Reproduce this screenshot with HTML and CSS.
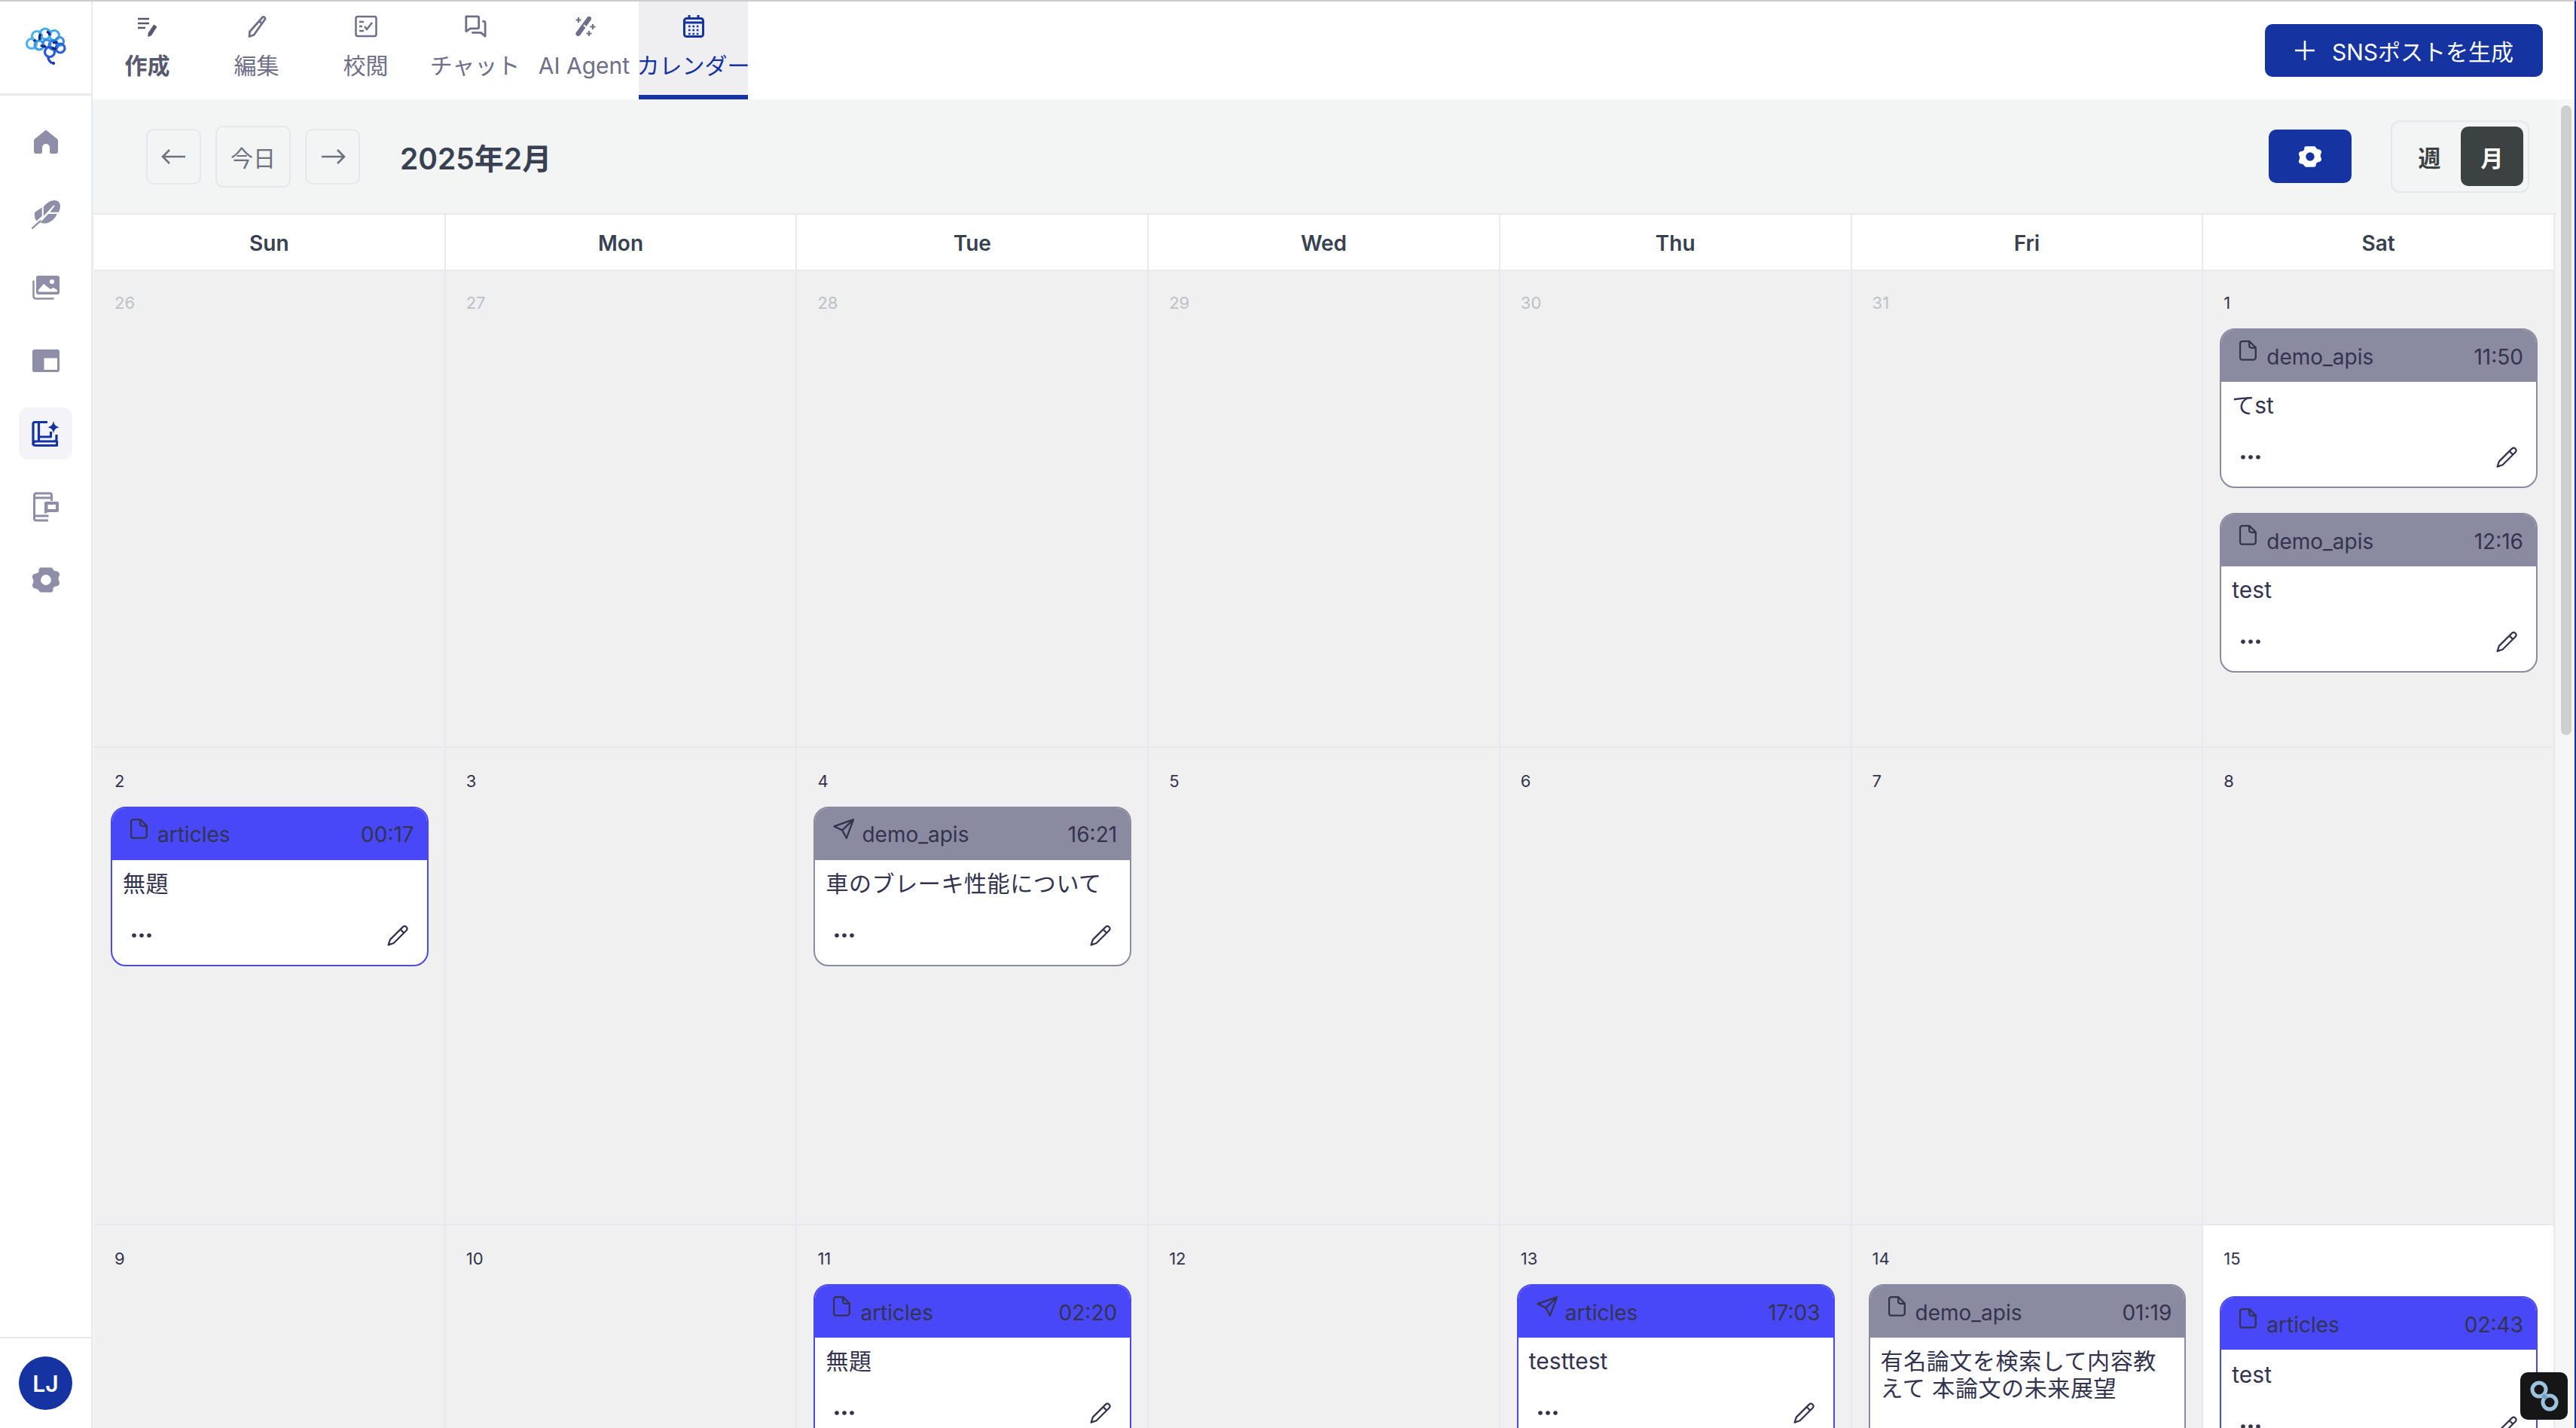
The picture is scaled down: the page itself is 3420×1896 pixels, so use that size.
FILE: index.html
```html
<!DOCTYPE html>
<html lang="ja">
<head>
    <meta charset="UTF-8">
    <title>カレンダー</title>
    <link rel="stylesheet" href="styles.css">
</head>
<body>
    <svg class="sprite" xmlns="http://www.w3.org/2000/svg">
        <symbol id="i-file" viewBox="0 0 23 27"><path d="M4 1.2h9.5l8.3 8.3V22.5a3.2 3.2 0 0 1-3.2 3.2H4a3 3 0 0 1-3-3V4.2a3 3 0 0 1 3-3z M13.2 1.5v5.7a2.6 2.6 0 0 0 2.6 2.6h5.7" fill="none" stroke="currentColor" stroke-width="2.3" stroke-linejoin="round"/></symbol>
        <symbol id="i-send" viewBox="0 0 28 27"><path d="M27 1.2 1.6 10.2l10.6 5.2 5.6 10.4z M27 1.2 12.2 15.4" fill="none" stroke="currentColor" stroke-width="2.3" stroke-linejoin="round" stroke-linecap="round"/></symbol>
        <symbol id="i-pencil" viewBox="0 0 28 28"><path d="M21 2.6a3.3 3.3 0 0 1 4.7 4.6L8.6 24.3 1.6 26.6l2.3-7z M17.6 6l4.6 4.6" fill="none" stroke="currentColor" stroke-width="2.2" stroke-linejoin="round"/></symbol>
        <symbol id="i-dots" viewBox="0 0 26 6"><circle cx="3" cy="3" r="2.8" fill="currentColor"/><circle cx="13" cy="3" r="2.8" fill="currentColor"/><circle cx="23" cy="3" r="2.8" fill="currentColor"/></symbol>
        <symbol id="i-gear" viewBox="0 0 36 34"><path fill="currentColor" fill-rule="evenodd" d="M12 1.5h12a3 3 0 0 1 2.6 1.5c1 2 2.7 3 5 3.2 2.8.3 4.4 3.5 3 5.8-1.300 2.300-1.300 4.700 0 7 1.400 2.300-.2 5.500-3 5.800-2.300.2-4 1.200-5 3.200A3 3 0 0 1 24 32.500H12A3 3 0 0 1 9.400 31c-1-2-2.700-3-5-3.200-2.800-.3-4.400-3.500-3-5.800 1.300-2.300 1.300-4.700 0-7-1.400-2.300.2-5.500 3-5.800 2.300-.2 4-1.200 5-3.200A3 3 0 0 1 12 1.500z M18 10.500a6.500 6.500 0 1 0 0 13 6.500 6.500 0 0 0 0-13z"/></symbol>
    </svg>

    <div class="app">
        <aside class="sidebar">
            <div class="logo">
                <svg width="54" height="50" viewBox="0 0 54 50" fill="none" stroke-width="3.200">
                    <circle cx="8" cy="22" r="6.500" stroke="#4fb4ea"/>
                    <circle cx="15" cy="12" r="6.500" stroke="#4fb4ea"/>
                    <circle cx="26" cy="9" r="7" stroke="#45aee8"/>
                    <circle cx="38" cy="11" r="6.500" stroke="#45a6e6"/>
                    <circle cx="45" cy="19" r="5.500" stroke="#3b8fe4"/>
                    <circle cx="46" cy="28" r="6" stroke="#2b62dc"/>
                    <circle cx="37" cy="24" r="6" stroke="#2f73de"/>
                    <circle cx="18" cy="24" r="6" stroke="#3c9be6"/>
                    <circle cx="28" cy="22" r="5" stroke="#3a8be2"/>
                    <circle cx="32" cy="33" r="6.500" stroke="#2559d8"/>
                    <path d="M30 40c0 5 3 6 5 8" stroke="#1f4cc8"/>
                    <path d="M20 9c-2 3-2 5-1 8M28 6c3 1 4 2 4 5M11 17l2 2M20 24c3 2 5 2 7 1M36 21c3-1 5-1 6 0M35 27c2 2 4 2 6 1" stroke="#14288a"/>
                    <circle cx="37" cy="48" r="2" fill="#14288a" stroke="none"/>
                </svg>
            </div>
            <nav class="side-nav">
                <a class="side-item" href="#"><svg width="36" height="36" viewBox="0 0 36 36"><path fill="currentColor" d="M18 2.500 33 14.500c.7.6 1 1.300 1 2.200V31a3 3 0 0 1-3 3h-6a2 2 0 0 1-2-2v-6a5 5 0 0 0-10 0v6a2 2 0 0 1-2 2H5a3 3 0 0 1-3-3V16.700c0-.9.3-1.600 1-2.200z"/></svg></a>
                <a class="side-item" href="#"><svg width="38" height="38" viewBox="0 0 36 36"><path fill="currentColor" d="M4 15l9-6v11l-7 6c-2-3-3-7-2-11zM15 8C19 3 24 0 29 0c4 0 7 3 7 7 0 3-1 6-2 8H23l6-8-1-1-13 14zM21 17h11c-3 7-9 12-16 12-2 0-4-.5-5-1z"/><path fill="none" stroke="currentColor" stroke-width="2.200" stroke-linecap="round" d="M1 35l10-9"/></svg></a>
                <a class="side-item" href="#"><svg width="36" height="32" viewBox="0 0 36 32"><path fill="currentColor" fill-rule="evenodd" d="M8 0h25a3 3 0 0 1 3 3v19a3 3 0 0 1-3 3H8a3 3 0 0 1-3-3V3a3 3 0 0 1 3-3zM26 5a3 3 0 1 0 0 6 3 3 0 0 0 0-6zM15 11 8 19v2.500h25V19l-5-3-4 2z"/><path fill="none" stroke="currentColor" stroke-width="2.500" d="M1.500 6.500v21a3 3 0 0 0 3 3h24"/></svg></a>
                <a class="side-item" href="#"><svg width="36" height="30" viewBox="0 0 36 30"><path fill="currentColor" fill-rule="evenodd" d="M3 0h30a3 3 0 0 1 3 3v24a3 3 0 0 1-3 3H3a3 3 0 0 1-3-3V3a3 3 0 0 1 3-3zM15.500 11.500v15.500h17.500V11.500z"/></svg></a>
                <a class="side-item is-active" href="#"><svg width="38" height="38" viewBox="0 0 38 38"><path fill="none" stroke="currentColor" stroke-width="3.200" stroke-linejoin="round" d="M21 3.500H4a2 2 0 0 0-2 2V33c0-2.500 1.500-4 4-4h24a3 3 0 0 0 3-3V20M33.500 28v6.500H6c-2.200 0-4-.6-4-2M9.500 4v25M9.500 23h16v-7"/><path fill="currentColor" d="M29 1.500c.8 5.500 3 8 8.500 8.800-5.500.8-7.700 3-8.500 8.700-.8-5.700-3-7.900-8.500-8.700 5.500-.8 7.700-3.300 8.500-8.800z"/></svg></a>
                <a class="side-item" href="#"><svg width="34" height="40" viewBox="0 0 34 40"><path fill="none" stroke="currentColor" stroke-width="3" stroke-linejoin="round" d="M20 38H4a2.500 2.500 0 0 1-2.500-2.500V4.500A2.500 2.500 0 0 1 4 2h18a2.500 2.500 0 0 1 2.500 2.500V12M1.500 8h23M1.500 32h19"/><path fill="currentColor" fill-rule="evenodd" d="M17 13h15a2 2 0 0 1 2 2v10a2 2 0 0 1-2 2H20l-5 2V15a2 2 0 0 1 2-2zM19.500 17v6H30v-6z"/></svg></a>
                <a class="side-item" href="#"><svg width="40" height="36" class="side-gear"><use href="#i-gear"/></svg></a>
            </nav>
            <div class="side-foot">
                <div class="avatar">LJ</div>
            </div>
        </aside>

        <main class="main">
            <header class="topbar">
                <nav class="tabs">
                    <a class="tab is-strong" href="#">
                        <svg width="30" height="30" viewBox="0 0 30 30" fill="none" stroke="currentColor" stroke-width="2.600"><path d="M2 5h15M2 11h15M2 17h10"/><path fill="currentColor" stroke-width="1.500" stroke-linejoin="round" d="M23.500 13.500l3 2-7 11-3.500 1.500.5-4z"/></svg>
                        <span>作成</span>
                    </a>
                    <a class="tab" href="#">
                        <svg width="30" height="30" viewBox="0 0 30 30" fill="none" stroke="currentColor" stroke-width="2.800" stroke-linejoin="round"><path d="M23 2.500c1.500-.5 3.500 1 3 2.800L11 26.500l-6 2 .5-6.500zM19 9l4 3"/></svg>
                        <span>編集</span>
                    </a>
                    <a class="tab" href="#">
                        <svg width="30" height="30" viewBox="0 0 30 30" fill="none" stroke="currentColor" stroke-width="2.500"><rect x="1.500" y="2" width="27" height="26" rx="2.500"/><path d="M6 9h6M6 15h4M6 21h6M13 15l3 4 7-9"/></svg>
                        <span>校閲</span>
                    </a>
                    <a class="tab" href="#">
                        <svg width="32" height="32" viewBox="0 0 32 32" fill="none" stroke="currentColor" stroke-width="3" stroke-linejoin="round"><path d="M3 2h16a2 2 0 0 1 2 2v13a2 2 0 0 1-2 2H9l-6 4z"/><path d="M26 9h2.500a2 2 0 0 1 1.500 2v19l-6-5H11"/></svg>
                        <span>チャット</span>
                    </a>
                    <a class="tab" href="#">
                        <svg width="32" height="30" viewBox="0 0 32 30"><path fill="currentColor" d="M20 2.500c1-1 3-1 4 0 1.300 1 1.500 2.800.5 4L10 27c-1 1.300-3 1.500-4.500.3C4 26 4 24 5 22.800z"/><path fill="#fff" d="M15.500 12.500l3.500 3-1.200 1.600-3.500-3z"/><path fill="none" stroke="currentColor" stroke-width="2.200" d="M8 3v7M4.500 6.500h7M27 12v7M23.500 15.500h7M22 21v7M18.500 24.500h7"/></svg>
                        <span>AI Agent</span>
                    </a>
                    <a class="tab is-active" href="#">
                        <svg width="28" height="30" viewBox="0 0 28 30" fill="none" stroke="currentColor" stroke-width="3"><rect x="1.500" y="4.500" width="25" height="24" rx="3"/><path d="M1.500 10h25M8 0v5M20 0v5" /><path stroke-width="2.400" stroke-dasharray="2.600 2.800" d="M7 15h14M7 20h14M7 25h14"/></svg>
                        <span>カレンダー</span>
                    </a>
                </nav>
                <a class="btn-generate" href="#">
                    <svg width="28" height="28" viewBox="0 0 28 28" stroke="currentColor" stroke-width="2.600"><path d="M14 1v26M1 14h26"/></svg>
                    <span>SNSポストを生成</span>
                </a>
            </header>

            <div class="body-wrap">
                <div class="scroller">
                    <div class="toolbar">
                        <div class="toolbar-left">
                            <button class="nav-btn">
                                <svg width="34" height="24" viewBox="0 0 34 24" fill="none" stroke="currentColor" stroke-width="2.600"><path d="M32 12H3M11 3l-9 9 9 9"/></svg>
                            </button>
                            <button class="nav-btn today-btn">今日</button>
                            <button class="nav-btn">
                                <svg width="34" height="24" viewBox="0 0 34 24" fill="none" stroke="currentColor" stroke-width="2.600"><path d="M2 12h29M23 3l9 9-9 9"/></svg>
                            </button>
                            <h2 class="month-title">2025年2月</h2>
                        </div>
                        <div class="toolbar-right">
                            <button class="gear-btn"><svg width="32" height="30"><use href="#i-gear"/></svg></button>
                            <div class="view-toggle">
                                <button class="view-btn">週</button>
                                <button class="view-btn is-active">月</button>
                            </div>
                        </div>
                    </div>

                    <div class="calendar">
                        <div class="head-cell">Sun</div>
                        <div class="head-cell">Mon</div>
                        <div class="head-cell">Tue</div>
                        <div class="head-cell">Wed</div>
                        <div class="head-cell">Thu</div>
                        <div class="head-cell">Fri</div>
                        <div class="head-cell">Sat</div>

                        <div class="cell"><div class="day muted">26</div></div>
                        <div class="cell"><div class="day muted">27</div></div>
                        <div class="cell"><div class="day muted">28</div></div>
                        <div class="cell"><div class="day muted">29</div></div>
                        <div class="cell"><div class="day muted">30</div></div>
                        <div class="cell"><div class="day muted">31</div></div>
                        <div class="cell">
                            <div class="day">1</div>
                            <div class="card">
                                <div class="card-head"><span class="card-src"><svg class="ic-file"><use href="#i-file"/></svg>demo_apis</span><span>11:50</span></div>
                                <div class="card-body"><div class="card-title">てst</div><div class="card-foot"><svg class="ic-dots"><use href="#i-dots"/></svg><svg class="ic-pencil"><use href="#i-pencil"/></svg></div></div>
                            </div>
                            <div class="card">
                                <div class="card-head"><span class="card-src"><svg class="ic-file"><use href="#i-file"/></svg>demo_apis</span><span>12:16</span></div>
                                <div class="card-body"><div class="card-title">test</div><div class="card-foot"><svg class="ic-dots"><use href="#i-dots"/></svg><svg class="ic-pencil"><use href="#i-pencil"/></svg></div></div>
                            </div>
                        </div>

                        <div class="cell">
                            <div class="day">2</div>
                            <div class="card card-blue">
                                <div class="card-head"><span class="card-src"><svg class="ic-file"><use href="#i-file"/></svg>articles</span><span>00:17</span></div>
                                <div class="card-body"><div class="card-title ja">無題</div><div class="card-foot"><svg class="ic-dots"><use href="#i-dots"/></svg><svg class="ic-pencil"><use href="#i-pencil"/></svg></div></div>
                            </div>
                        </div>
                        <div class="cell"><div class="day">3</div></div>
                        <div class="cell">
                            <div class="day">4</div>
                            <div class="card">
                                <div class="card-head"><span class="card-src"><svg class="ic-send"><use href="#i-send"/></svg>demo_apis</span><span>16:21</span></div>
                                <div class="card-body"><div class="card-title ja">車のブレーキ性能について</div><div class="card-foot"><svg class="ic-dots"><use href="#i-dots"/></svg><svg class="ic-pencil"><use href="#i-pencil"/></svg></div></div>
                            </div>
                        </div>
                        <div class="cell"><div class="day">5</div></div>
                        <div class="cell"><div class="day">6</div></div>
                        <div class="cell"><div class="day">7</div></div>
                        <div class="cell"><div class="day">8</div></div>

                        <div class="cell"><div class="day">9</div></div>
                        <div class="cell"><div class="day">10</div></div>
                        <div class="cell">
                            <div class="day">11</div>
                            <div class="card card-blue">
                                <div class="card-head"><span class="card-src"><svg class="ic-file"><use href="#i-file"/></svg>articles</span><span>02:20</span></div>
                                <div class="card-body"><div class="card-title ja">無題</div><div class="card-foot"><svg class="ic-dots"><use href="#i-dots"/></svg><svg class="ic-pencil"><use href="#i-pencil"/></svg></div></div>
                            </div>
                        </div>
                        <div class="cell"><div class="day">12</div></div>
                        <div class="cell">
                            <div class="day">13</div>
                            <div class="card card-blue">
                                <div class="card-head"><span class="card-src"><svg class="ic-send"><use href="#i-send"/></svg>articles</span><span>17:03</span></div>
                                <div class="card-body"><div class="card-title">testtest</div><div class="card-foot"><svg class="ic-dots"><use href="#i-dots"/></svg><svg class="ic-pencil"><use href="#i-pencil"/></svg></div></div>
                            </div>
                        </div>
                        <div class="cell">
                            <div class="day">14</div>
                            <div class="card">
                                <div class="card-head"><span class="card-src"><svg class="ic-file"><use href="#i-file"/></svg>demo_apis</span><span>01:19</span></div>
                                <div class="card-body"><div class="card-title ja">有名論文を検索して内容教えて 本論文の未来展望</div><div class="card-foot"><svg class="ic-dots"><use href="#i-dots"/></svg><svg class="ic-pencil"><use href="#i-pencil"/></svg></div></div>
                            </div>
                        </div>
                        <div class="cell is-today">
                            <div class="day">15</div>
                            <div class="card card-blue">
                                <div class="card-head"><span class="card-src"><svg class="ic-file"><use href="#i-file"/></svg>articles</span><span>02:43</span></div>
                                <div class="card-body"><div class="card-title">test</div><div class="card-foot"><svg class="ic-dots"><use href="#i-dots"/></svg><svg class="ic-pencil"><use href="#i-pencil"/></svg></div></div>
                            </div>
                        </div>
                    </div>
                </div>
                <div class="scroll-track"><div class="scroll-thumb"></div></div>
            </div>
        </main>
    </div>

    <div class="float-widget">
        <svg width="40" height="46" viewBox="0 0 40 46" fill="none" stroke="#9cc3de" stroke-width="5"><circle cx="13" cy="14" r="9"/><circle cx="27" cy="31" r="9"/><path d="M18 21l5 5" stroke="#6f9cc0"/></svg>
    </div>
</body>
</html>
```

FILE: styles.css
```css
* {
    box-sizing: border-box;
}
html, body {
    margin: 0;
    padding: 0;
    height: 100%;
    overflow: hidden;
}
body {
    font-family: Inter, "Noto Sans CJK JP", sans-serif;
    color: #33334f;
    background-color: #fff;
}
a {
    text-decoration: none;
    color: inherit;
}
button {
    font-family: inherit;
    cursor: pointer;
}
.sprite {
    display: none;
}
.app {
    display: flex;
    height: 1896px;
    border-top: 2px solid #cccccc;
    border-right: 2px solid #1533a1;
}

/* left rail */
.sidebar {
    width: 123px;
    flex-shrink: 0;
    display: flex;
    flex-direction: column;
    border-right: 2px solid #e8e8ee;
}
.logo {
    height: 125px;
    display: flex;
    align-items: center;
    justify-content: center;
    padding-bottom: 4px;
    border-bottom: 3px solid #e8e8ee;
}
.side-nav {
    display: flex;
    flex-direction: column;
    align-items: center;
    gap: 28px;
    margin-top: 26px;
}
.side-item {
    width: 71px;
    height: 69px;
    display: flex;
    align-items: center;
    justify-content: center;
    border-radius: 12px;
    color: #8e8ea8;
}
.side-item.is-active {
    background-color: #f4f4f8;
    color: #1533a1;
}
.side-foot {
    margin-top: auto;
    height: 121px;
    border-top: 2px solid #e8e8ee;
    padding: 24px 25px;
}
.avatar {
    width: 71px;
    height: 71px;
    border-radius: 50%;
    background-color: #1533a1;
    color: #fff;
    font-size: 30px;
    font-weight: 600;
    display: flex;
    align-items: center;
    justify-content: center;
}

/* top tabs */
.main {
    flex: 1;
    min-width: 0;
    display: flex;
    flex-direction: column;
}
.topbar {
    height: 130px;
    flex-shrink: 0;
    display: flex;
    justify-content: space-between;
    align-items: center;
    padding-right: 42px;
}
.tabs {
    display: flex;
    height: 100%;
}
.tab {
    width: 145px;
    display: flex;
    flex-direction: column;
    align-items: center;
    padding-top: 18px;
    gap: 18px;
    color: #6f6f8a;
    font-size: 30px;
    line-height: 38px;
    white-space: nowrap;
}
.tab svg {
    height: 30px;
    flex-shrink: 0;
}
.tab.is-strong {
    color: #58586f;
    font-weight: 600;
}
.tab.is-active {
    background-color: #efeff1;
    border-bottom: 6px solid #1533a1;
    color: #1533a1;
}
.btn-generate {
    display: flex;
    align-items: center;
    gap: 22px;
    height: 70px;
    width: 369px;
    padding-left: 39px;
    background-color: #1533a1;
    border-radius: 10px;
    color: #fff;
    font-size: 30px;
}

/* calendar */
.body-wrap {
    flex: 1;
    min-height: 0;
    display: flex;
}
.scroller {
    flex: 1;
    min-width: 0;
    overflow: hidden;
    background-color: #f3f4f4;
}
.scroll-track {
    width: 24px;
    flex-shrink: 0;
    background-color: #f6f6f7;
    padding: 8px 4px 0 6px;
}
.scroll-thumb {
    height: 836px;
    background-color: #cfcfcf;
    border-radius: 8px;
}
.toolbar {
    height: 153px;
    display: flex;
    justify-content: space-between;
    align-items: center;
    padding: 0 36px 0 71px;
    border-bottom: 2px solid #e8e8ee;
}
.toolbar-left, .toolbar-right {
    display: flex;
    align-items: center;
}
.nav-btn {
    width: 73px;
    height: 74px;
    margin-right: 19px;
    padding: 0;
    display: flex;
    align-items: center;
    justify-content: center;
    background-color: transparent;
    border: 2px solid #e5e7eb;
    border-radius: 10px;
    color: #6b7280;
}
.today-btn {
    width: 100px;
    height: 82px;
    font-size: 30px;
}
.month-title {
    margin: 0 0 0 34px;
    font-size: 39px;
    font-weight: 600;
    color: #374151;
}
.gear-btn {
    width: 110px;
    height: 71px;
    margin-right: 52px;
    padding: 0;
    display: flex;
    align-items: center;
    justify-content: center;
    background-color: #1533a1;
    border: none;
    border-radius: 10px;
    color: #fff;
}
.view-toggle {
    width: 184px;
    height: 96px;
    display: flex;
    align-items: center;
    justify-content: flex-end;
    padding-right: 6px;
    border: 2px solid #e5e7eb;
    border-radius: 12px;
}
.view-btn {
    width: 83px;
    height: 79px;
    padding: 0;
    background: transparent;
    border: none;
    border-radius: 10px;
    font-size: 30px;
    font-weight: 600;
    color: #3c4242;
}
.view-btn.is-active {
    background-color: #3c4242;
    color: #fff;
}
.calendar {
    width: 3267px;
    margin-left: 2px;
    display: grid;
    grid-template-columns: repeat(7, minmax(0, 1fr));
    grid-template-rows: 75px 632.5px;
    grid-auto-rows: 634.5px;
}
.head-cell {
    display: flex;
    align-items: center;
    justify-content: center;
    padding-top: 2px;
    background-color: #fff;
    border-right: 2px solid #e8e8ee;
    border-bottom: 2px solid #e8e8ee;
    font-size: 28px;
    font-weight: 600;
    color: #374151;
}
.cell {
    background-color: #f0f0f0;
    border-right: 2px solid #e8e8ee;
    border-bottom: 2px solid #e8e8ee;
    padding: 0 21px 0 22px;
    min-width: 0;
}
.cell.is-today {
    background-color: #fff;
}
.day {
    padding: 32px 0 0 5px;
    height: 78px;
    font-size: 22px;
    line-height: 24px;
    color: #33334f;
}
.day.muted {
    color: #bfbfc8;
}
.cell:nth-child(-n+14) .day {
    padding-top: 30px;
    height: 76px;
}
.is-today .day {
    height: 94px;
}

/* post card */
.card {
    margin-bottom: 33px;
    height: 212px;
    background-color: #fff;
    border: 2px solid #8a8aa0;
    border-radius: 20px;
    overflow: hidden;
    --head: #8a8aa0;
}
.card-blue {
    border-color: #4848f8;
    --head: #4848f8;
}
.card-head {
    height: 69px;
    display: flex;
    justify-content: space-between;
    align-items: center;
    padding: 2px 17px 0 24px;
    background-color: var(--head);
    border-radius: 15px 15px 0 0;
    font-size: 28px;
    color: #33334f;
}
.card-src {
    display: flex;
    align-items: center;
}
.ic-file, .ic-send {
    width: 23px;
    height: 27px;
    margin: 0 13px 16px 0;
    flex-shrink: 0;
}
.ic-send {
    width: 28px;
    margin: 0 10px 16px 0;
}
.card-body {
    padding: 13px 14px 0;
}
.is-today .card-body {
    padding-top: 15px;
}
.card-title {
    min-height: 36px;
    font-size: 30px;
    line-height: 36px;
}
.card-title.ja {
    letter-spacing: 0.6px;
}
.card-foot {
    display: flex;
    justify-content: space-between;
    align-items: center;
    height: 40px;
    margin-top: 31px;
    padding: 0 11px 0 12px;
}
.ic-dots {
    width: 26px;
    height: 6px;
}
.ic-pencil {
    width: 28px;
    height: 28px;
}

/* chat helper stuck over the corner */
.float-widget {
    position: absolute;
    left: 3346px;
    top: 1822px;
    width: 63px;
    height: 63px;
    display: flex;
    align-items: center;
    justify-content: center;
    background-color: #161616;
    border-radius: 10px;
}
```
